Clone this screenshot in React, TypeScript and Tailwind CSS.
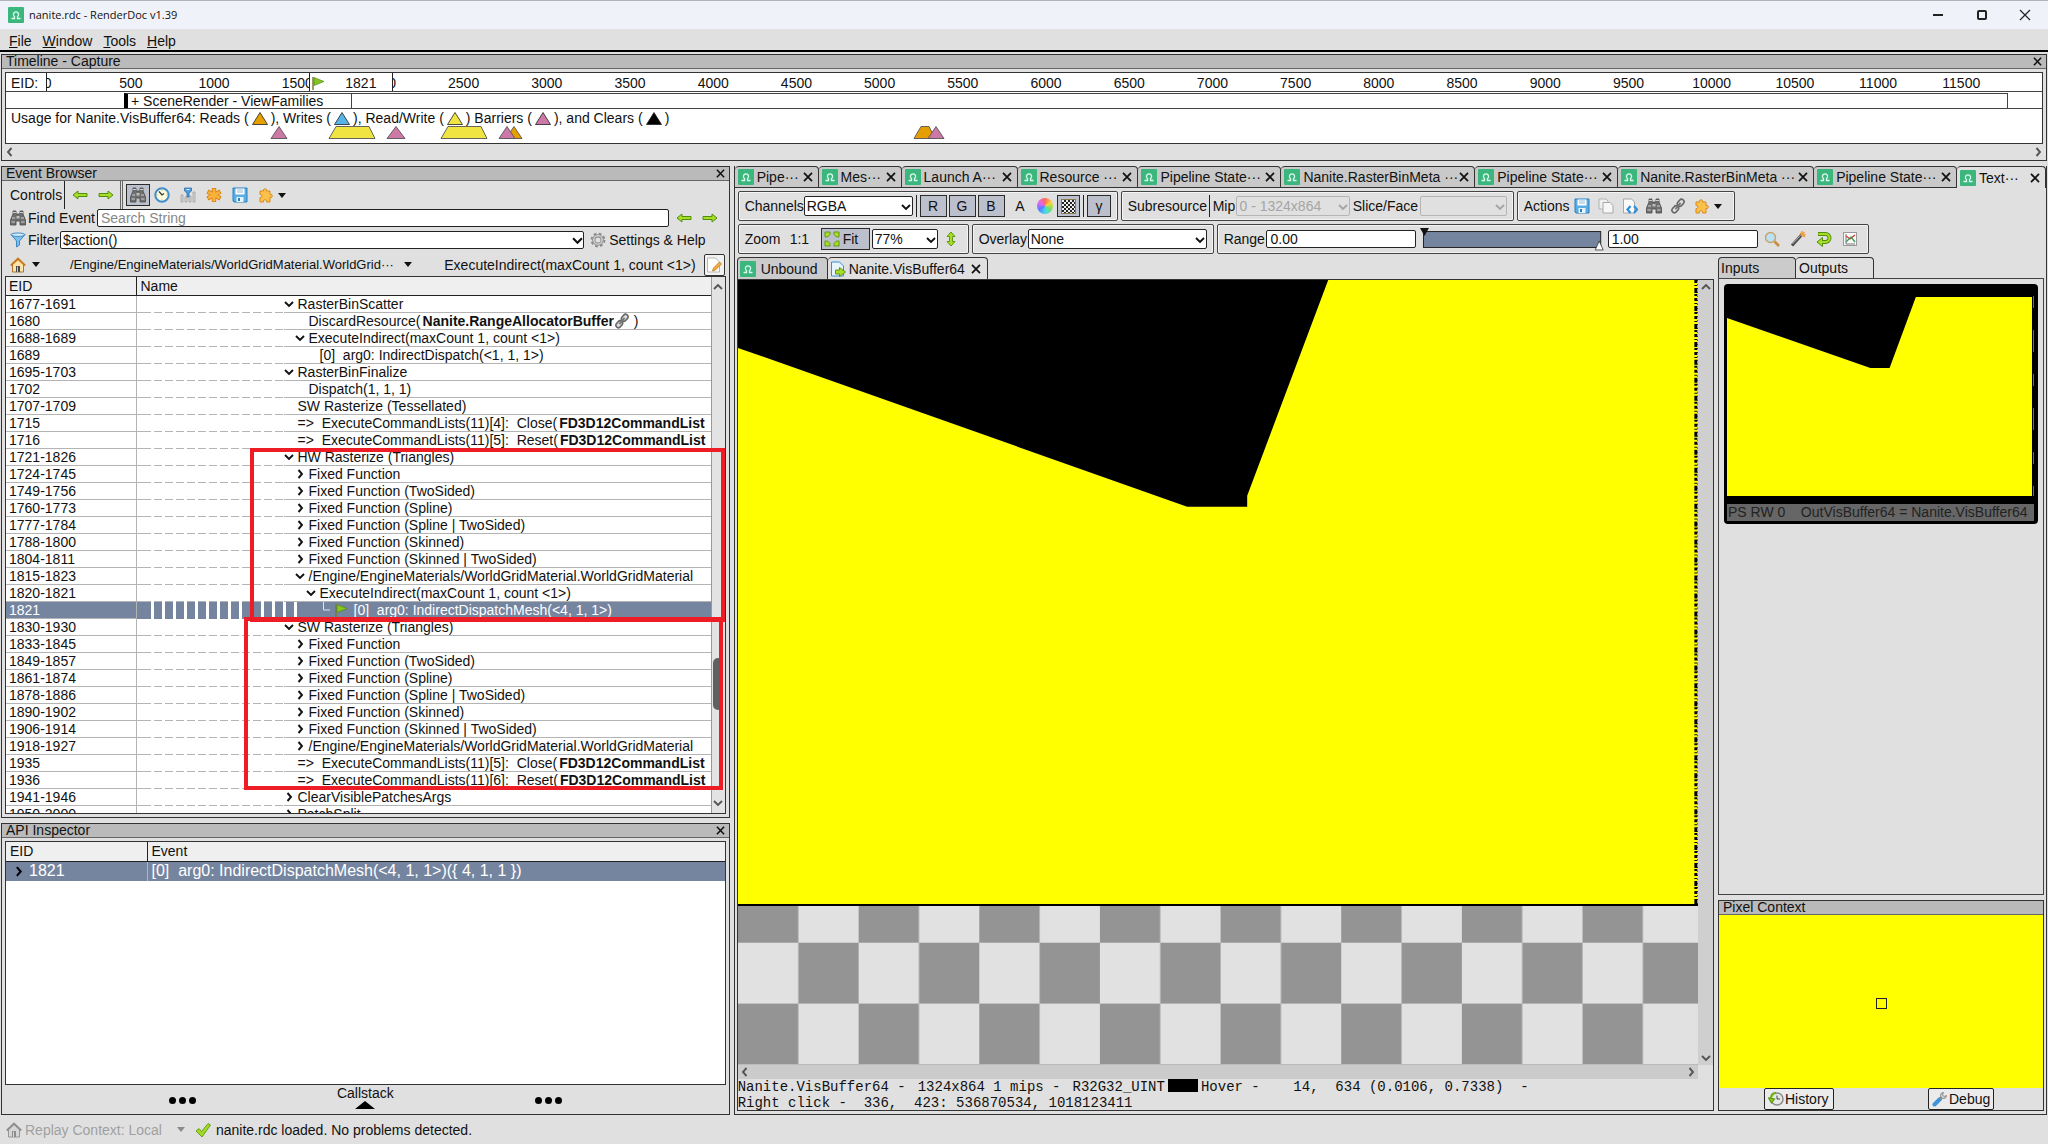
import { useState } from "react";
import type { ReactNode } from "react";

interface EventRow {
  eid: string;
  name: string;
  depth: number;
  bold?: string;
  link?: boolean;
  open?: boolean;
}

const fixedFunctions = ["Fixed Function", "Fixed Function (TwoSided)", "Fixed Function (Spline)", "Fixed Function (Spline | TwoSided)", "Fixed Function (Skinned)", "Fixed Function (Skinned | TwoSided)"];

const material = "/Engine/EngineMaterials/WorldGridMaterial.WorldGridMaterial";

const fixedRows = (eids: string[]): EventRow[] => eids.map((eid, i) => ({ eid, name: fixedFunctions[i], depth: 1, open: false }));

const events: EventRow[] = [
  { eid: "1677-1691", name: "RasterBinScatter", depth: 0, open: true },
  { eid: "1680", name: "DiscardResource(", bold: "Nanite.RangeAllocatorBuffer", link: true, depth: 1 },
  { eid: "1688-1689", name: "ExecuteIndirect(maxCount 1, count <1>)", depth: 1, open: true },
  { eid: "1689", name: "[0]  arg0: IndirectDispatch(<1, 1, 1>)", depth: 2 },
  { eid: "1695-1703", name: "RasterBinFinalize", depth: 0, open: true },
  { eid: "1702", name: "Dispatch(1, 1, 1)", depth: 1 },
  { eid: "1707-1709", name: "SW Rasterize (Tessellated)", depth: 0 },
  { eid: "1715", name: "=>  ExecuteCommandLists(11)[4]:  Close(", bold: "FD3D12CommandList", depth: 0 },
  { eid: "1716", name: "=>  ExecuteCommandLists(11)[5]:  Reset(", bold: "FD3D12CommandList", depth: 0 },
  { eid: "1721-1826", name: "HW Rasterize (Triangles)", depth: 0, open: true },
  ...fixedRows(["1724-1745", "1749-1756", "1760-1773", "1777-1784", "1788-1800", "1804-1811"]),
  { eid: "1815-1823", name: material, depth: 1, open: true },
  { eid: "1820-1821", name: "ExecuteIndirect(maxCount 1, count <1>)", depth: 2, open: true },
  { eid: "1821", name: "[0]  arg0: IndirectDispatchMesh(<4, 1, 1>)", depth: 3 },
  { eid: "1830-1930", name: "SW Rasterize (Triangles)", depth: 0, open: true },
  ...fixedRows(["1833-1845", "1849-1857", "1861-1874", "1878-1886", "1890-1902", "1906-1914"]),
  { eid: "1918-1927", name: material, depth: 1, open: false },
  { eid: "1935", name: "=>  ExecuteCommandLists(11)[5]:  Close(", bold: "FD3D12CommandList", depth: 0 },
  { eid: "1936", name: "=>  ExecuteCommandLists(11)[6]:  Reset(", bold: "FD3D12CommandList", depth: 0 },
  { eid: "1941-1946", name: "ClearVisiblePatchesArgs", depth: 0, open: false },
  { eid: "1950-2000", name: "PatchSplit", depth: 0, open: false },
];

const depthPadding = ["pl-0", "pl-[11px]", "pl-[22px]", "pl-[33px]"];

const windowTabs = [
  { label: "Pipe···", size: "flex-[75]" },
  { label: "Mes···", size: "flex-[74]" },
  { label: "Launch A···", size: "flex-[107]" },
  { label: "Resource ···", size: "flex-[112]" },
  { label: "Pipeline State···", size: "flex-[134]" },
  { label: "Nanite.RasterBinMeta ···", size: "flex-[185]" },
  { label: "Pipeline State···", size: "flex-[134]" },
  { label: "Nanite.RasterBinMeta ···", size: "flex-[187]" },
  { label: "Pipeline State···", size: "flex-[134]" },
  { label: "Text···", size: "flex-[80]" },
];

/* ---------- icons ---------- */

const Logo = () => (
  <svg viewBox="0 0 16 16" className="size-4 shrink-0">
    <rect width="16" height="16" rx="1" fill="#3bb77e" />
    <path d="M3.500 11.500h3V9.600a2.600 2.600 0 1 1 3 0v1.900h3" fill="none" stroke="#dcfbee" strokeWidth="1.300" />
  </svg>
);

const Arrow = ({ left = false }: { left?: boolean }) => (
  <svg viewBox="0 0 16 10" className="h-[10px] w-4 shrink-0">
    <path d={left ? "M1 5l5-4v2.500h9v3H6V9z" : "M15 5l-5-4v2.500H1v3h9V9z"} fill="#a8dc28" stroke="#4f8f0c" strokeWidth="1" />
  </svg>
);

const Binoculars = () => (
  <svg viewBox="0 0 16 16" className="size-4 shrink-0">
    <path d="M3 1h3v3h4V1h3v3l2.500 6v5H10v-4H6v4H.5v-5L3 4z" fill="#6f6f6f" stroke="#4a4a4a" strokeWidth=".8" />
    <path d="M3 2.500h3M10 2.500h3M2 8h3M11 8h3M1.500 12h3.500M11 12h3.500" stroke="#d0d0d0" />
    <path d="M6.500 6h3v2.500h-3z" fill="#bdbdbd" />
  </svg>
);

const Clock = () => (
  <svg viewBox="0 0 16 16" className="size-4">
    <circle cx="8" cy="8" r="6.700" fill="#fdf9dc" stroke="#3f8fd0" strokeWidth="2" />
    <path d="M5 4.500L8 8l2-1.500" fill="none" stroke="#333" strokeWidth="1.200" />
    <path d="M8 2.500v1M8 12.500v1M2.500 8h1M12.500 8h1" stroke="#c9a640" />
  </svg>
);

const BarsFilter = () => (
  <svg viewBox="0 0 16 16" className="size-4">
    <path d="M1 8h2v7H1zM5 10h2v5H5zM9 9h2v6H9zM13 5h2v10h-2z" fill="#d8d8d8" stroke="#9a9a9a" strokeWidth=".7" />
    <path d="M4.500 1h7v3L9 6v4H7V6L4.500 4z" fill="#4d9bdb" stroke="#2368a5" strokeWidth=".7" />
    <path d="M6.500 2.500h3" stroke="#e3f2fc" />
  </svg>
);

const Asterisk = () => (
  <svg viewBox="0 0 16 16" className="size-4">
    <path d="M8 1v14M1.500 4.500l13 7M14.500 4.500l-13 7" stroke="#d9820f" strokeWidth="4.400" />
    <path d="M8 1.700v12.600M2.200 4.900l11.600 6.200M13.800 4.900L2.200 11.100" stroke="#f8b13c" strokeWidth="2.800" />
  </svg>
);

const Floppy = () => (
  <svg viewBox="0 0 16 16" className="size-4">
    <path d="M1 1h14v14H2l-1-1z" fill="#5aaee6" stroke="#2b7fbd" />
    <path d="M3.500 1.500h9v6h-9z" fill="#fff" />
    <path d="M5 3h6M5 5h6" stroke="#9ab8cc" />
    <path d="M4.500 10h7v5h-7z" fill="#e8f4fb" />
    <path d="M6 11h2v3H6z" fill="#2b7fbd" />
  </svg>
);

const Puzzle = () => (
  <svg viewBox="0 0 16 16" className="size-4">
    <path d="M2 4h3.500c-1-3 4-3 3 0H12v3.500c3-1 3 4 0 3V15H8.500c1-3-4-3-3 0H2v-4.500c2.500.8 2.500-3.600 0-3z" fill="#fbc04a" stroke="#d98a1b" />
  </svg>
);

const Caret = ({ faded = false }: { faded?: boolean }) => (
  <svg viewBox="0 0 8 5" className="h-[5px] w-2 shrink-0">
    <path d="M0 0h8L4 5z" fill={faded ? "#8a8a8a" : "#111"} />
  </svg>
);

const Funnel = () => (
  <svg viewBox="0 0 16 16" className="size-4 shrink-0">
    <path d="M1 2.500L6.500 9v6l3-2V9L15 2.500z" fill="#7cc0ee" stroke="#2f7fbf" strokeWidth=".9" />
    <ellipse cx="8" cy="2.700" rx="7" ry="1.700" fill="#d3ecfb" stroke="#2f7fbf" strokeWidth=".9" />
  </svg>
);

const Gear = () => (
  <svg viewBox="0 0 16 16" className="size-4 shrink-0">
    <circle cx="8" cy="8" r="6.500" fill="none" stroke="#8a8a8a" strokeWidth="1.800" strokeDasharray="2.700 2.405" />
    <circle cx="8" cy="8" r="4.200" fill="none" stroke="#858585" strokeWidth="3.200" />
    <circle cx="8" cy="8" r="4.200" fill="none" stroke="#cfcfcf" strokeWidth="1.600" />
  </svg>
);

const House = ({ faded = false }: { faded?: boolean }) => (
  <svg viewBox="0 0 16 16" className="size-4 shrink-0">
    <path d="M2.500 7.500L8 2.500l5.500 5V15h-11z" fill={faded ? "#d6d6d6" : "#fbe3ab"} stroke={faded ? "#8d8d8d" : "#a56a1d"} strokeWidth=".9" />
    <path d="M.8 8.500L8 1.500l7.200 7" fill="none" stroke={faded ? "#8d8d8d" : "#c87a1a"} strokeWidth="1.800" />
    <path d="M6 9h4v6H6z" fill={faded ? "#8d8d8d" : "#4a4a4a"} />
    <path d="M7.500 9.500v5.500" stroke="#e9e9e9" strokeWidth=".8" />
  </svg>
);

const LinkIcon = () => (
  <svg viewBox="0 0 16 16" className="size-4 shrink-0">
    <g fill="none" transform="rotate(-50 8 8)">
      <rect x="0" y="5.500" width="7.500" height="5" rx="2.500" fill="#ddd" stroke="#666" strokeWidth="1.600" />
      <rect x="8.500" y="5.500" width="7.500" height="5" rx="2.500" fill="#ddd" stroke="#666" strokeWidth="1.600" />
      <path d="M4 8h8" stroke="#777" strokeWidth="1.800" />
    </g>
  </svg>
);

const CopyIcon = () => (
  <svg viewBox="0 0 16 16" className="size-4">
    <path d="M1 1h7l2 2v8H1z" fill="#efefef" stroke="#b3b3b3" />
    <path d="M5 4.500h7l3 3V15H5z" fill="#f7f7f7" stroke="#a8a8a8" />
  </svg>
);

const PageCode = () => (
  <svg viewBox="0 0 16 16" className="size-4">
    <path d="M1.500 1h8l3 3v11h-11z" fill="#fafafa" stroke="#a8a8a8" />
    <path d="M8.500 8L5.500 11.500l3 3.500M12 8l3 3.500-3 3.500" fill="none" stroke="#2b8fd8" strokeWidth="2.200" />
  </svg>
);

const PageEdit = () => (
  <svg viewBox="0 0 16 16" className="size-4">
    <path d="M1.500 1h8l4 4v10h-12z" fill="#fff" stroke="#b5b5b5" />
    <path d="M6.500 14l1-3 6-6 2 2-6 6z" fill="#f4ae3d" stroke="#b9741a" strokeWidth=".8" />
  </svg>
);

const PageGo = () => (
  <svg viewBox="0 0 16 16" className="size-4 shrink-0">
    <path d="M1.500 1h8l4 4v10h-12z" fill="#e8f4fd" stroke="#3f8fd0" />
    <path d="M5.500 9h4V6.500l6 4.500-6 4.500V13h-4z" fill="#a8dc28" stroke="#4f8f0c" strokeWidth=".9" />
  </svg>
);

const Flag = () => (
  <svg viewBox="0 0 14 14" className="size-[14px] shrink-0">
    <path d="M2 1v13" stroke="#7a7a3a" strokeWidth="1.500" />
    <path d="M3 1.500l10 4-10 4z" fill="#86c423" stroke="#4f8f0c" strokeWidth=".7" />
  </svg>
);

const ColorWheel = () => <span className="size-4 rounded-full bg-[conic-gradient(#ff6a5e,#ffd23c,#6fe36b,#45d7f0,#5b7bff,#e368f0,#ff6a5e)]" />;

const Checker = () => <span className="size-[15px] border border-[#8a7a4a] bg-[repeating-conic-gradient(#222_0_25%,#eee_0_50%)] bg-size-[4px_4px]" />;

const FitIcon = () => (
  <svg viewBox="0 0 16 16" className="size-4 shrink-0">
    <path d="M1 1h5v2.500l-2.500 2.500H1zM10 1h5v5h-2.500L10 3.500zM1 10h2.500L6 12.500V15H1zM15 10v5h-5v-2.500l2.500-2.500z" fill="#a8dc28" stroke="#5e9a12" />
  </svg>
);

const UpDown = () => (
  <svg viewBox="0 0 10 16" className="h-4 w-[10px]">
    <path d="M5 1l4 4.500H6.500v5H9L5 15l-4-4.500h2.500v-5H1z" fill="#a8dc28" stroke="#5e9a12" />
  </svg>
);

const Magnifier = () => (
  <svg viewBox="0 0 16 16" className="size-4">
    <path d="M10.500 10.500l4.500 4.500" stroke="#c98b3c" strokeWidth="2.600" />
    <circle cx="6.500" cy="6.500" r="5" fill="#b9e1f7" stroke="#c7a46b" strokeWidth="1.500" />
  </svg>
);

const Wand = () => (
  <svg viewBox="0 0 16 16" className="size-4">
    <path d="M2 14.500L11.500 4" stroke="#4a4a4a" strokeWidth="3" />
    <path d="M2.500 13L10.500 4.500" stroke="#b5b5b5" />
    <path d="M12 0v3M15.500 4h-3M10 2l5 4M14.500 1L11 5" stroke="#f29a2e" strokeWidth="1.300" />
  </svg>
);

const ResetArrow = () => (
  <svg viewBox="0 0 16 16" className="size-4">
    <path d="M2 3h7.500a3.800 3.800 0 0 1 0 8H6" fill="none" stroke="#4f8f0c" strokeWidth="4" />
    <path d="M6.500 6.500v9L1 11z" fill="#a8dc28" stroke="#4f8f0c" />
    <path d="M2.500 3h7a3.800 3.800 0 0 1 0 8H5" fill="none" stroke="#a8dc28" strokeWidth="2.200" />
  </svg>
);

const Graph = () => (
  <svg viewBox="0 0 16 16" className="size-4">
    <rect x="1.500" y="1.500" width="13" height="13" fill="#fafafa" stroke="#9a9a9a" />
    <path d="M4 3v10h9" fill="none" stroke="#777" />
    <path d="M4 5l4 3 5-4" fill="none" stroke="#d23a2e" strokeWidth="1.300" />
    <path d="M4 11l5-5 4 5" fill="none" stroke="#3a9a5a" strokeWidth="1.300" />
  </svg>
);

const HistoryIcon = () => (
  <svg viewBox="0 0 16 16" className="size-4">
    <circle cx="9" cy="8" r="6" fill="#e9e9e9" stroke="#8a8a8a" strokeWidth="1.500" />
    <path d="M9 4.500V8h3" fill="none" stroke="#444" />
    <path d="M8 1.500C4 1.500 2.500 4.500 2.800 8M.5 7l3 5 3-4z" fill="#8fce1e" stroke="#5e9a12" strokeWidth="1.200" />
  </svg>
);

const Wrench = () => (
  <svg viewBox="0 0 16 16" className="size-4">
    <path d="M2.500 13.500L8 8" stroke="#3f93d8" strokeWidth="4" strokeLinecap="round" />
    <path d="M8 8l3-3" stroke="#8b8b8b" strokeWidth="2.500" />
    <path d="M14.500 4.500a3 3 0 1 1-3-3L10.500 4l1.500 1.500z" fill="#d0d0d0" stroke="#8b8b8b" />
  </svg>
);

const Tick = () => (
  <svg viewBox="0 0 16 16" className="size-4 shrink-0">
    <path d="M1 9l3-2.500 2.500 3L13 1.500l2.500 1.500L7 15z" fill="#a0d927" stroke="#5e9a12" strokeWidth=".9" />
  </svg>
);

const Chevron = ({ dir, className = "size-[10px]" }: { dir: "up" | "down" | "left" | "right"; className?: string }) => {
  const paths = { up: "M1 7L5 3l4 4", down: "M1 3L5 7l4-4", left: "M6.500 1L3 5l3.500 4", right: "M3.500 1L7 5 3.500 9" };
  return (
    <svg viewBox="0 0 10 10" className={`shrink-0 ${className}`}>
      <path d={paths[dir]} fill="none" stroke="currentColor" strokeWidth="1.900" />
    </svg>
  );
};

const Cross = ({ className = "size-[10px]" }: { className?: string }) => (
  <svg viewBox="0 0 10 10" className={`shrink-0 ${className}`}>
    <path d="M1 .8l8 8.400M9 .8L1 9.200" stroke="currentColor" strokeWidth="1.700" />
  </svg>
);

const Triangle = ({ color }: { color: string }) => (
  <svg viewBox="0 0 16 13" className="h-[13px] w-4">
    <path d="M8 .5L15.500 12.500H.5z" fill={color} stroke="#222" strokeWidth=".8" />
  </svg>
);

/* ---------- small building blocks ---------- */

const TitleStrip = ({ children, closable = true }: { children: ReactNode; closable?: boolean }) => (
  <div className="flex h-[14px] items-center justify-between border-b border-[#666] bg-[#bababa] px-1 leading-[13px]">
    <h2>{children}</h2>
    {closable && (
      <button aria-label="Close">
        <Cross className="size-[9px]" />
      </button>
    )}
  </div>
);

const IconButton = ({ label, pressed = false, children }: { label: string; pressed?: boolean; children: ReactNode }) => (
  <button aria-label={label} className={`flex h-[22px] w-6 items-center justify-center ${pressed ? "border border-[#2b2b2b] bg-[#bcc0cc]" : ""}`}>
    {children}
  </button>
);

const Select = ({ id, value, className, disabled = false }: { id: string; value: string; className: string; disabled?: boolean }) => (
  <span className={`relative flex ${className}`}>
    <select id={id} disabled={disabled} className={`h-5 w-full appearance-none rounded-xs border pl-[2px] leading-4 ${disabled ? "border-[#b5b5b5] text-[#a5a5a5]" : "border-[#222] bg-white"}`}>
      <option>{value}</option>
    </select>
    <Chevron dir="down" className={`pointer-events-none absolute top-[6px] right-[2px] size-[10px] ${disabled ? "text-[#a5a5a5]" : ""}`} />
  </span>
);

const Group = ({ className, children }: { className: string; children: ReactNode }) => <div className={`flex h-[30px] shrink-0 items-center rounded-xs border border-[#444] px-[6px] shadow-[inset_0_0_0_1px_#f4f4f4] ${className}`}>{children}</div>;

const Divider = () => <span className="mx-[3px] h-[22px] w-px bg-[#222]" />;

const Dots = () => (
  <span className="flex gap-[3px] pt-[12px]">
    <i className="size-[7px] rounded-full bg-black" />
    <i className="size-[7px] rounded-full bg-black" />
    <i className="size-[7px] rounded-full bg-black" />
  </span>
);

/* ---------- panels ---------- */

const Timeline = () => (
  <section className="mx-px mt-[2px] border border-[#333]">
    <TitleStrip>Timeline - Capture</TitleStrip>
    <div className="mx-[3px] mt-[3px] border border-[#333] bg-white">
      <div className="relative flex h-[19px] items-center overflow-hidden border-b border-[#444] pt-px pr-[39px]">
        {Array.from({ length: 24 }, (_, i) => (
          <span key={i} className="flex flex-1 basis-0 justify-center">
            {i * 500}
          </span>
        ))}
        <span className="absolute inset-y-0 left-0 flex w-[41px] items-center border-r border-[#222] bg-white pt-px pl-[5px]">EID:</span>
        <span className="absolute inset-y-0 left-[14.9%] flex w-[84px] items-center border-x border-[#222] bg-white pt-px pl-px">
          <Flag />
          <span className="flex-1 pl-1 text-center">1821</span>
        </span>
      </div>
      <div className="mt-px flex h-4 border-b border-[#444] leading-[15px]">
        <span className="w-[118px]" />
        <button className="flex w-[228px] border-t border-r border-l-4 border-[#444] border-l-black pl-[3px] text-left leading-[15px]">+ SceneRender - ViewFamilies</button>
        <span className="flex-1 border-t border-r border-[#444]" />
        <span className="w-[34px]" />
      </div>
      <div className="h-[34px] pt-[2px]">
        <div className="flex items-center gap-[3px] pl-[5px] leading-[15px]">
          Usage for Nanite.VisBuffer64: Reads (<Triangle color="#e69f00" />
          ), Writes (<Triangle color="#56b4e9" />
          ), Read/Write (<Triangle color="#f0e442" />) Barriers (<Triangle color="#cc79a7" />
          ), and Clears (<Triangle color="#000" />)
        </div>
        <svg viewBox="0 0 2036 13" preserveAspectRatio="none" className="h-[13px] w-full" stroke="#555" strokeWidth=".9">
          <path d="M273 .5l8 12h-16z" fill="#cc79a7" />
          <path d="M330 .5h33l6 12h-46z" fill="#f0e442" />
          <path d="M390 .5l9 12h-18z" fill="#cc79a7" />
          <path d="M442 .5h33l6 12h-46z" fill="#f0e442" />
          <path d="M508 .5l8 12h-16z" fill="#e69f00" />
          <path d="M501 .5l8 12h-16z" fill="#cc79a7" />
          <path d="M915 .5h8l6 12h-21z" fill="#e69f00" />
          <path d="M930 .5l8 12h-16z" fill="#cc79a7" />
        </svg>
      </div>
    </div>
    <div className="flex h-4 items-center justify-between px-[3px] text-[#555]">
      <Chevron dir="left" />
      <Chevron dir="right" />
    </div>
  </section>
);

const EventTree = () => {
  const [selected, setSelected] = useState("1821");

  return (
    <div className="relative mx-[3px] flex border border-[#333] bg-white">
      <div className="h-[536px] min-w-0 flex-1 overflow-hidden">
        <table className="w-full table-fixed border-collapse text-left">
          <thead>
            <tr className="h-[18px] bg-[#efefef]">
              <th className="w-[130px] border-r border-b border-[#222] pl-[3px] leading-4 font-normal">EID</th>
              <th className="border-b border-[#222] pl-1 leading-4 font-normal">Name</th>
            </tr>
          </thead>
          <tbody>
            {events.map((row) => {
              const active = row.eid === selected;
              return (
                <tr key={row.eid} onClick={() => setSelected(row.eid)} className={`h-[17px] leading-4 ${active ? "bg-[#76859f] text-white" : ""}`}>
                  <td className="border-r border-b border-[#b4b4b4] pl-[3px]">{row.eid}</td>
                  <td className="overflow-hidden whitespace-pre">
                    <div className="flex">
                      <span className={`w-[14px] shrink-0 ${active ? "" : "border-b border-[#b4b4b4]"}`} />
                      <span className={active ? "w-[151px] shrink-0 bg-[repeating-linear-gradient(90deg,#fff_0_3px,#76859f_3px_11px)]" : "w-[133px] shrink-0 bg-[repeating-linear-gradient(90deg,#fff_0_3px,#b4b4b4_3px_11px)] bg-size-[100%_1px] bg-bottom bg-no-repeat"} />
                      <span className={`flex min-w-0 flex-1 border-b border-[#b4b4b4] ${active ? "pl-[20px]" : depthPadding[row.depth]}`}>
                        {active && row.depth === 3 ? (
                          <>
                            <svg viewBox="0 0 8 16" className="h-4 w-2">
                              <path d="M1.500 0v8H8" fill="none" stroke="#dfe4ee" />
                            </svg>
                            <span className="flex w-6 items-center pl-1">
                              <Flag />
                            </span>
                          </>
                        ) : (
                          <span className="flex w-[14px] shrink-0 items-center">{row.open !== undefined && <Chevron dir={row.open ? "down" : "right"} />}</span>
                        )}
                        {row.name}
                        {row.bold && <b className="pl-[2px]">{row.bold}</b>}
                        {row.link && (
                          <>
                            <LinkIcon /> )
                          </>
                        )}
                      </span>
                    </div>
                  </td>
                </tr>
              );
            })}
          </tbody>
        </table>
      </div>
      <div className="flex w-[14px] flex-col items-center justify-between border-l border-[#999] bg-[#e3e3e3] py-[5px] text-[#555]">
        <Chevron dir="up" />
        <Chevron dir="down" />
      </div>
      <span className="absolute top-[381px] right-[2px] h-[52px] w-[10px] rounded-full bg-[#606060]" />
      {/* review marks around the two rasterize passes */}
      <span className="absolute top-[171px] right-0 left-[244px] h-[174px] border-4 border-[#ee1c24]" />
      <span className="absolute top-[340px] right-[2px] left-[238px] h-[173px] border-4 border-[#ee1c24]" />
    </div>
  );
};

const EventBrowser = () => {
  const [search, setSearch] = useState("");

  return (
    <section className="border border-[#333] pb-[3px]">
      <TitleStrip>Event Browser</TitleStrip>
      <div className="flex h-7 items-center pl-2">
        <span className="w-[54px]">Controls</span>
        <span className="mr-[7px] h-7 w-px bg-[#222]" />
        <button aria-label="Previous event">
          <Arrow left />
        </button>
        <button aria-label="Next event" className="mr-[6px] ml-[10px]">
          <Arrow />
        </button>
        <span className="mr-[3px] h-7 w-[3px] border-x border-[#666]" />
        <IconButton label="Find" pressed>
          <Binoculars />
        </IconButton>
        <div className="flex gap-[2px]">
          <IconButton label="Time durations">
            <Clock />
          </IconButton>
          <IconButton label="Columns">
            <BarsFilter />
          </IconButton>
          <IconButton label="Bookmark">
            <Asterisk />
          </IconButton>
          <IconButton label="Export">
            <Floppy />
          </IconButton>
          <IconButton label="Extensions">
            <Puzzle />
          </IconButton>
        </div>
        <Caret />
      </div>
      <div className="flex h-[18px] items-center pl-2">
        <Binoculars />
        <label htmlFor="find" className="w-[71px] pl-[2px] whitespace-nowrap">
          Find Event
        </label>
        <input id="find" value={search} onChange={(e) => setSearch(e.target.value)} placeholder="Search String" className="h-[18px] min-w-0 flex-1 rounded-xs border border-[#222] bg-white px-[3px] placeholder:text-[#888]" />
        <button aria-label="Find previous" className="mr-[10px] ml-[7px]">
          <Arrow left />
        </button>
        <button aria-label="Find next" className="mr-[11px]">
          <Arrow />
        </button>
      </div>
      <div className="mt-1 flex h-[18px] items-center pl-2">
        <Funnel />
        <label htmlFor="filter" className="w-[34px] pl-[2px]">
          Filter
        </label>
        <span className="relative flex min-w-0 flex-1">
          <input id="filter" defaultValue="$action()" className="h-[18px] w-full rounded-xs border border-[#222] bg-white px-[2px]" />
          <Chevron dir="down" className="absolute top-1 right-[1px] size-[11px]" />
        </span>
        <button className="ml-[6px] flex items-center gap-[3px] pr-[23px]">
          <Gear />
          Settings &amp; Help
        </button>
      </div>
      <div className="mt-1 flex h-[23px] items-center pr-1 pl-1">
        <button aria-label="Root" className="flex items-center gap-[6px] pl-1">
          <House />
          <Caret />
        </button>
        <button className="ml-[30px] text-[13px] whitespace-nowrap">/Engine/EngineMaterials/WorldGridMaterial.WorldGrid···</button>
        <span className="ml-[10px]">
          <Caret />
        </span>
        <button className="ml-auto shrink-0">ExecuteIndirect(maxCount 1, count &lt;1&gt;)</button>
        <button aria-label="Edit path" className="ml-2 flex h-[22px] w-[21px] items-center justify-center rounded-xs border border-[#333] bg-[#f2f2f2]">
          <PageEdit />
        </button>
      </div>
      <EventTree />
    </section>
  );
};

const ApiInspector = () => (
  <section className="mt-[5px] flex flex-1 flex-col border border-[#333]">
    <TitleStrip>API Inspector</TitleStrip>
    <div className="mx-[3px] mt-[3px] flex-1 border border-[#333] bg-white">
      <table className="w-full table-fixed border-collapse text-left">
        <thead>
          <tr className="h-[19px] bg-[#efefef]">
            <th className="w-[141px] border-r border-b border-[#222] pl-1 font-normal">EID</th>
            <th className="border-b border-[#222] pl-1 font-normal">Event</th>
          </tr>
        </thead>
        <tbody>
          <tr className="h-5 bg-[#76859f] text-[16px] leading-4 text-white">
            <td className="border-r border-[#b4b4b4]">
              <span className="flex items-center gap-[5px] pl-[7px]">
                <Chevron dir="right" className="size-[11px] text-black" />
                1821
              </span>
            </td>
            <td className="pl-1 whitespace-pre">{"[0]  arg0: IndirectDispatchMesh(<4, 1, 1>)({ 4, 1, 1 })"}</td>
          </tr>
        </tbody>
      </table>
    </div>
    <button className="flex h-[29px] items-start justify-between px-[23%] leading-4">
      <Dots />
      <span className="flex flex-col items-center">
        Callstack
        <svg viewBox="0 0 20 8" className="h-2 w-5">
          <path d="M10 0l10 8H0z" />
        </svg>
      </span>
      <Dots />
    </button>
  </section>
);

const Toolbars = () => {
  const [low, setLow] = useState("0.00");
  const [high, setHigh] = useState("1.00");

  return (
    <div className="flex flex-col gap-[3px] px-[3px] pt-[3px]">
      <div className="flex gap-[3px]">
        <Group className="w-[380px]">
          <label htmlFor="channels" className="w-[59px]">
            Channels
          </label>
          <Select id="channels" value="RGBA" className="w-[112px]" />
          <Divider />
          <div className="flex gap-[2px]">
            {["R", "G", "B"].map((c) => (
              <button key={c} aria-pressed="true" className="h-[22px] w-[27px] border border-[#2b2b2b] bg-[#bcc0cc]">
                {c}
              </button>
            ))}
            <button aria-pressed="false" className="w-[27px]">
              A
            </button>
          </div>
          <IconButton label="Custom shader">
            <ColorWheel />
          </IconButton>
          <IconButton label="Checkerboard background" pressed>
            <Checker />
          </IconButton>
          <Divider />
          <IconButton label="Gamma" pressed>
            γ
          </IconButton>
        </Group>
        <Group className="w-[393px]">
          <span className="w-[78px]">Subresource</span>
          <Divider />
          <label htmlFor="mip" className="w-[24px]">
            Mip
          </label>
          <Select id="mip" value="0 - 1324x864" className="w-[114px]" disabled />
          <label htmlFor="slice" className="ml-[3px] w-[68px]">
            Slice/Face
          </label>
          <Select id="slice" value="" className="w-[87px]" disabled />
        </Group>
        <Group className="w-[218px]">
          <span className="w-[46px]">Actions</span>
          <IconButton label="Save texture">
            <Floppy />
          </IconButton>
          <IconButton label="Copy">
            <CopyIcon />
          </IconButton>
          <IconButton label="Open as buffer">
            <PageCode />
          </IconButton>
          <IconButton label="Locate">
            <Binoculars />
          </IconButton>
          <IconButton label="Resource inspector">
            <LinkIcon />
          </IconButton>
          <IconButton label="Extensions">
            <Puzzle />
          </IconButton>
          <Caret />
        </Group>
      </div>
      <div className="flex gap-[3px]">
        <Group className="w-[231px]">
          <label htmlFor="zoom" className="w-[45px]">
            Zoom
          </label>
          <button className="w-[31px] text-left">1:1</button>
          <button aria-pressed="true" className="flex h-[22px] w-[49px] items-center gap-[3px] border border-[#2b2b2b] bg-[#bcc0cc] pl-[2px]">
            <FitIcon />
            Fit
          </button>
          <Select id="zoom" value="77%" className="ml-[2px] w-[66px]" />
          <button aria-label="Flip vertically" className="ml-2">
            <UpDown />
          </button>
        </Group>
        <Group className="w-[242px]">
          <label htmlFor="overlay" className="w-[49px]">
            Overlay
          </label>
          <Select id="overlay" value="None" className="w-[179px]" />
        </Group>
        <Group className="w-[652px]">
          <label htmlFor="range" className="w-[43px]">
            Range
          </label>
          <input id="range" value={low} onChange={(e) => setLow(e.target.value)} className="h-[18px] w-[150px] rounded-xs border border-[#222] bg-white px-[3px]" />
          <svg viewBox="0 0 184 24" className="mx-1 h-6 w-[184px]">
            <rect x="3.500" y="4.500" width="178" height="16" fill="#76859f" stroke="#222" />
            <path d="M0 1h9L4.500 9z" fill="#111" />
            <path d="M176 23h8l-4-9z" fill="#fff" stroke="#333" strokeWidth=".8" />
          </svg>
          <input aria-label="Range maximum" value={high} onChange={(e) => setHigh(e.target.value)} className="h-[18px] w-[150px] rounded-xs border border-[#222] bg-white px-[3px]" />
          <div className="flex gap-[2px] pl-[2px]">
            <IconButton label="Zoom range">
              <Magnifier />
            </IconButton>
            <IconButton label="Autofit range">
              <Wand />
            </IconButton>
            <IconButton label="Reset range">
              <ResetArrow />
            </IconButton>
            <IconButton label="Histogram">
              <Graph />
            </IconButton>
          </div>
        </Group>
      </div>
    </div>
  );
};

const TextureView = () => (
  <div className="mt-[3px] ml-[2px] flex min-w-0 flex-1 flex-col">
    <div className="flex h-[22px]">
      <button className="flex w-[91px] items-center gap-[5px] rounded-t-sm border border-b-0 border-[#333] bg-[#cbcbcb] px-[2px]">
        <Logo />
        Unbound
      </button>
      <button className="flex w-[160px] items-center gap-[3px] rounded-t-sm border border-b-0 border-l-0 border-[#333] px-[2px]">
        <PageGo />
        Nanite.VisBuffer64
        <Cross className="mr-1 ml-auto size-[10px]" />
      </button>
    </div>
    <div className="flex flex-1 flex-col border border-[#333]">
      <div className="flex min-h-0 flex-1">
        <div className="relative flex min-w-0 flex-1 flex-col">
          <svg viewBox="0 0 960 627" preserveAspectRatio="none" className="min-h-0 w-full flex-[626] basis-0">
            <rect width="960" height="627" fill="#ff0" />
            <path d="M0 0h590l-81 216v11h-60L0 68z" />
            <path d="M957.500 0v627" stroke="#000" strokeWidth="3" strokeDasharray="3 2 1 2 5 1 2 2" />
            <path d="M959.500 0v627" stroke="#000" strokeWidth="1" strokeDasharray="1 3" />
            <path d="M0 626h960" stroke="#000" strokeWidth="2" />
          </svg>
          <svg viewBox="0 0 960 158" preserveAspectRatio="none" className="min-h-0 w-full flex-[159] basis-0">
            <defs>
              <pattern id="squares" width="120.600" height="121" y="-24" patternUnits="userSpaceOnUse">
                <rect width="121" height="121" fill="#e1e1e1" />
                <path d="M0 0h60.300v60.500H0zM60.300 60.500h60.300V121H60.300z" fill="#949494" />
              </pattern>
            </defs>
            <rect width="960" height="158" fill="url(#squares)" />
          </svg>
        </div>
        <div className="flex w-[15px] flex-col items-center justify-between bg-[#cfcfcf] py-[2px] text-[#555]">
          <Chevron dir="up" />
          <Chevron dir="down" />
        </div>
      </div>
      <div className="mr-[15px] flex h-[14px] items-center justify-between bg-[#cbcbcb] px-[2px] text-[#555]">
        <Chevron dir="left" />
        <Chevron dir="right" />
      </div>
      <div className="h-[31px] font-['Liberation_Mono',monospace] leading-4 whitespace-pre">
        <div className="flex h-4">
          <span className="mr-3">Nanite.VisBuffer64 -</span>
          <span className="mr-3">1324x864 1 mips -</span>
          R32G32_UINT
          <span className="mx-[3px] h-[13px] w-[30px] bg-black" />
          {"Hover -    14,  634 (0.0106, 0.7338)  -"}
        </div>
        <div>{"Right click -  336,  423: 536870534, 1018123411"}</div>
      </div>
    </div>
  </div>
);

const SidePanels = () => (
  <div className="mt-[3px] mr-[2px] ml-1 flex w-[326px] shrink-0 flex-col">
    <div className="flex h-[21px]">
      <button className="w-[78px] rounded-t-sm border border-b-0 border-[#333] bg-[#cbcbcb] px-[2px] text-left">Inputs</button>
      <button className="w-[78px] rounded-t-sm border border-b-0 border-l-0 border-[#333] px-[3px] text-left">Outputs</button>
    </div>
    <div className="flex-[616] border border-[#444] p-[5px]">
      <button className="flex w-full flex-col rounded-sm bg-black pt-3 pr-1 pb-[3px] pl-[3px] text-left">
        <svg viewBox="0 0 304 200" preserveAspectRatio="none" className="h-[200px] w-full">
          <path d="M0 22l142 50h19l26-71h115v199H0z" fill="#ff0" />
          <path d="M303.500 0v200" stroke="#cc0" strokeWidth=".6" strokeDasharray="12 22 22 22" />
        </svg>
        <span className="mt-2 block h-[17px] w-full bg-[#666] px-px leading-[17px] whitespace-pre text-[#222]">{"PS RW 0    OutVisBuffer64 = Nanite.VisBuffer64"}</span>
      </button>
    </div>
    <div className="mt-[5px] flex flex-[213] flex-col border border-[#333]">
      <TitleStrip closable={false}>Pixel Context</TitleStrip>
      <div className="flex flex-1 items-center justify-center bg-[#ff0] pt-1">
        <span className="size-[11px] border border-[#222]" />
      </div>
      <div className="flex h-[22px] justify-between pr-[49px] pl-[45px]">
        <button className="flex w-[70px] items-center gap-px rounded-xs border border-[#222] bg-[#ebebeb] pl-[3px]">
          <HistoryIcon />
          History
        </button>
        <button className="flex w-[66px] items-center gap-px rounded-xs border border-[#222] bg-[#ebebeb] pl-[3px]">
          <Wrench />
          Debug
        </button>
      </div>
    </div>
  </div>
);

export default function App() {
  const [tab, setTab] = useState(windowTabs.length - 1);

  return (
    <div className="flex min-h-screen flex-col border-t border-[#b0b4b8] bg-[#e0e0e0] font-['Liberation_Sans','Noto_Sans_CJK_KR',sans-serif] text-[14px] leading-4 text-[#111]">
      <header className="flex h-7 items-center bg-[#eff3f9] pl-2">
        <Logo />
        <h1 className="pl-[5px] font-['Open_Sans',sans-serif] text-[11px]">nanite.rdc - RenderDoc v1.39</h1>
        <div className="ml-auto flex gap-[31px] pr-[17px]">
          <button aria-label="Minimize" className="flex size-3 items-center">
            <span className="h-[2px] w-[10px] bg-[#222]" />
          </button>
          <button aria-label="Maximize" className="flex size-3 items-center justify-center">
            <span className="size-[10px] rounded-xs border-2 border-[#222]" />
          </button>
          <button aria-label="Close window">
            <svg viewBox="0 0 12 12" className="size-3">
              <path d="M1 1l10 10M11 1L1 11" stroke="#222" strokeWidth="1.200" />
            </svg>
          </button>
        </div>
      </header>
      <nav className="flex h-[23px] items-center gap-[11px] border-b-2 border-black pt-[3px] pl-[9px]">
        {["File", "Window", "Tools", "Help"].map((item) => (
          <button key={item}>
            <u>{item[0]}</u>
            {item.slice(1)}
          </button>
        ))}
      </nav>
      <Timeline />
      <main className="mt-[5px] grid flex-1 grid-cols-[729fr_1314fr] gap-x-1 px-px">
        <div className="flex min-w-0 flex-col">
          <EventBrowser />
          <ApiInspector />
        </div>
        <div className="flex min-w-0 flex-col border border-t-0 border-[#333] pb-[3px]">
          <div className="flex h-[22px]">
            {windowTabs.map((t, i) => (
              <div key={i} className={`flex min-w-0 items-center rounded-t-sm border-t border-r border-[#333] pr-[5px] pl-[3px] ${t.size} ${i === tab ? "" : "border-b bg-[#c9c9c9]"}`}>
                <button onClick={() => setTab(i)} className="flex min-w-0 flex-1 items-center gap-[3px] whitespace-nowrap">
                  <Logo />
                  {t.label}
                </button>
                <button aria-label="Close tab">
                  <Cross />
                </button>
              </div>
            ))}
          </div>
          <Toolbars />
          <div className="flex min-h-0 flex-1">
            <TextureView />
            <SidePanels />
          </div>
        </div>
      </main>
      <footer className="flex h-[29px] items-center pl-[6px]">
        <House faded />
        <button disabled className="flex items-center gap-[15px] pl-[3px] text-[#a0a0a0]">
          Replay Context: Local
          <Caret faded />
        </button>
        <span className="flex items-center gap-[5px] pl-[10px]">
          <Tick />
          nanite.rdc loaded. No problems detected.
        </span>
      </footer>
    </div>
  );
}
